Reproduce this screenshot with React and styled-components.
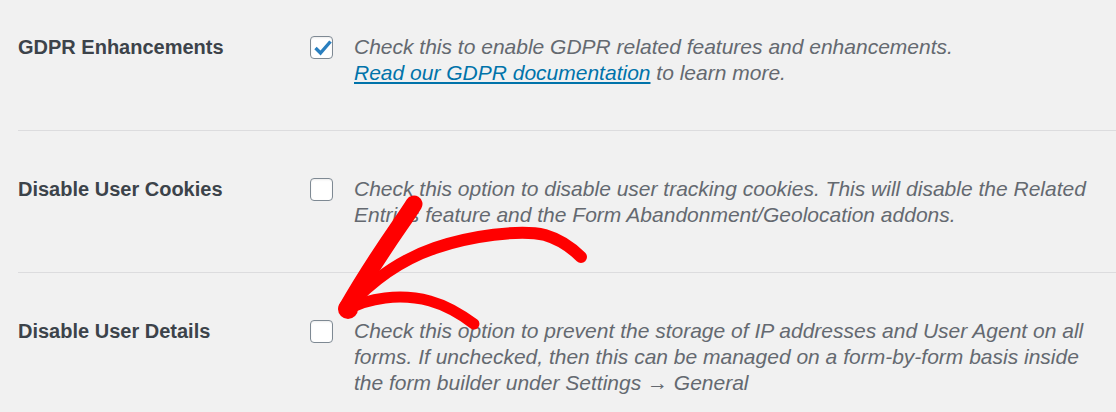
import React from "react";
import styled, { createGlobalStyle } from "styled-components";

const GlobalStyle = createGlobalStyle`
  body {
    margin: 0;
    background: #f1f1f1;
    font-family: "Liberation Sans", Arial, sans-serif;
  }
`;

const Page = styled.div`
  position: relative;
  width: 1116px;
  height: 412px;
  overflow: hidden;
  padding-left: 18px;
  box-sizing: border-box;
`;

const Row = styled.div`
  display: grid;
  grid-template-columns: 292px 44px 1fr;
  padding: 45px 0 44px;
  border-bottom: 1px solid #dcdcde;

  &:first-child {
    padding-top: 34px;
  }
`;

const Label = styled.div`
  font-size: 20px;
  line-height: 26px;
  font-weight: 700;
  color: #3c434a;
`;

const CheckCell = styled.div`
  height: 26px;
  display: flex;
  align-items: center;
`;

const Box = styled.span`
  position: relative;
  width: 23px;
  height: 23px;
  box-sizing: border-box;
  border: 1px solid #7e8993;
  border-radius: 4px;
  background: #fff;
  box-shadow: inset 0 1px 2px rgba(0, 0, 0, 0.08);

  svg {
    position: absolute;
    left: 0;
    top: 0;
  }
`;

const Description = styled.p`
  margin: 0;
  max-width: 745px;
  font-size: 21px;
  line-height: 26px;
  font-style: italic;
  color: #646970;
`;

const DocLink = styled.a`
  color: #0073aa;
  text-decoration: underline;
`;

const Arrow = styled.svg`
  position: absolute;
  left: 0;
  top: 0;
  pointer-events: none;
`;

const Checkbox = ({ checked }) => (
  <CheckCell>
    <Box>
      {checked && (
        <svg width="21" height="21" viewBox="0 0 21 21">
          <path
            d="M4.5 11 L9.5 16 L19.5 4.5"
            fill="none"
            stroke="#2a7fbf"
            strokeWidth="3.4"
            strokeLinejoin="miter"
          />
        </svg>
      )}
    </Box>
  </CheckCell>
);

const settings = [
  {
    id: "gdpr",
    label: "GDPR Enhancements",
    checked: true,
    text: (
      <>
        Check this to enable GDPR related features and enhancements.
        <br />
        <DocLink href="#">Read our GDPR documentation</DocLink> to learn more.
      </>
    ),
  },
  {
    id: "cookies",
    label: "Disable User Cookies",
    checked: false,
    text: "Check this option to disable user tracking cookies. This will disable the Related Entries feature and the Form Abandonment/Geolocation addons.",
  },
  {
    id: "details",
    label: "Disable User Details",
    checked: false,
    text: "Check this option to prevent the storage of IP addresses and User Agent on all forms. If unchecked, then this can be managed on a form-by-form basis inside the form builder under Settings \u2192 General",
  },
];

const App = () => (
  <>
    <GlobalStyle />
    <Page>
      {settings.map((s) => (
        <Row key={s.id}>
          <Label>{s.label}</Label>
          <Checkbox checked={s.checked} />
          <Description>{s.text}</Description>
        </Row>
      ))}
      {/* hand-drawn red arrow pointing at the last checkbox */}
      <Arrow width="1116" height="412" viewBox="0 0 1116 412">
        <g fill="none" stroke="#f00" strokeLinecap="round" strokeLinejoin="round">
          <path
            d="M581 257 C572 248 562 240 545 235 C520 229 470 236 435 248 C400 260 372 280 347 308"
            strokeWidth="12"
          />
          <path d="M414 204 C403 222 378 254 347 308" strokeWidth="17" />
          <path
            d="M347 310 C368 298 400 293 430 301 C448 306 462 315 474 324"
            strokeWidth="11"
          />
        </g>
        <circle cx="348" cy="309" r="10" fill="#f00" />
      </Arrow>
    </Page>
  </>
);

export default App;
